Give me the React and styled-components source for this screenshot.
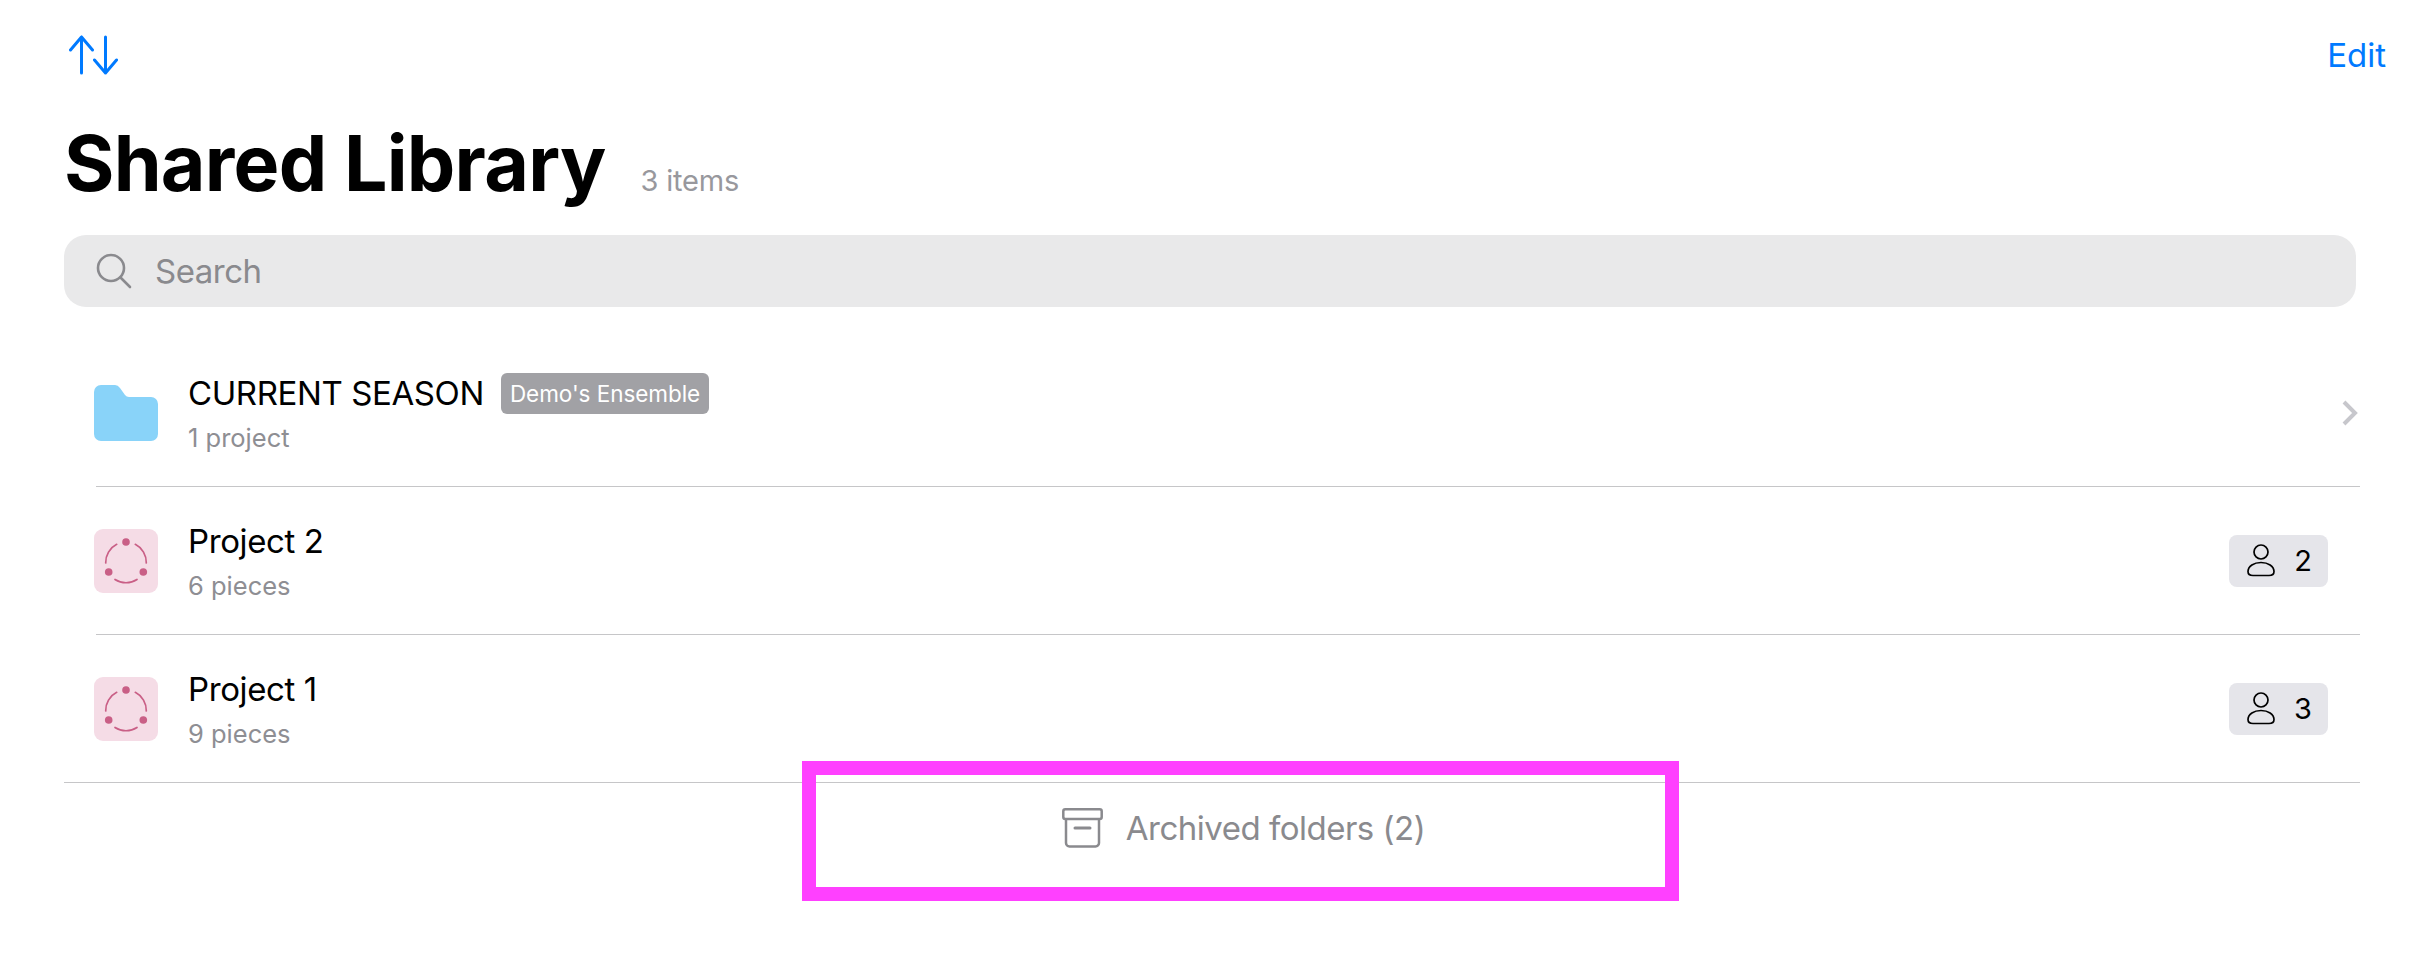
import React from 'react';
import styled, { createGlobalStyle } from 'styled-components';

const GlobalStyle = createGlobalStyle`
    html, body {
        margin: 0;
        padding: 0;
        background: #fff;
        font-family: Inter, "Liberation Sans", sans-serif;
        color: #000;
    }
`;

const Page = styled.div`
    width: 2420px;
    height: 971px;
    overflow: hidden;
    box-sizing: border-box;
`;

const TopBar = styled.div`
    display: flex;
    justify-content: space-between;
    align-items: flex-start;
    height: 123px;
    padding: 35px 34px 0 69px;
    box-sizing: border-box;
`;

const EditButton = styled.span`
    color: #007aff;
    font-size: 33px;
    line-height: 40px;
`;

const TitleRow = styled.div`
    display: flex;
    align-items: baseline;
    gap: 35px;
    height: 112px;
    padding-left: 64px;
`;

const Title = styled.h1`
    margin: 0;
    font-size: 77px;
    line-height: 80px;
    font-weight: 700;
    letter-spacing: -0.75px;
`;

const ItemCount = styled.span`
    color: #98989d;
    font-size: 29px;
    letter-spacing: -0.2px;
`;

const SearchBar = styled.div`
    display: flex;
    align-items: center;
    gap: 23px;
    height: 72px;
    margin: 0 64px;
    padding-left: 32px;
    background: #e9e9ea;
    border-radius: 22px;
    color: #8a8a8e;
    font-size: 33px;
    letter-spacing: -0.5px;
`;

const List = styled.div`
    margin: 32px 60px 0 64px;
`;

const Row = styled.div`
    display: flex;
    align-items: center;
    height: 148px;
    box-sizing: border-box;
    border-bottom: 1px solid #c6c6c8;
    margin-left: ${props => (props.$last ? '0' : '32px')};
    padding-left: ${props => (props.$last ? '30px' : '0')};
    & > svg:first-child {
        margin-left: ${props => (props.$last ? '0' : '-2px')};
    }
`;

const RowText = styled.div`
    flex: 1;
    margin-left: 30px;
`;

const RowTitleLine = styled.div`
    display: flex;
    align-items: center;
    gap: 17px;
    height: 41px;
    font-size: 33px;
    letter-spacing: -0.4px;
`;

const RowSub = styled.div`
    margin-top: 9px;
    color: #8e8e93;
    font-size: 25.5px;
    line-height: 30px;
`;

const Badge = styled.span`
    display: flex;
    align-items: center;
    height: 41px;
    padding: 0 9px;
    background: #a1a1a5;
    border-radius: 6px;
    color: #fff;
    font-size: 22.5px;
    letter-spacing: -0.05px;
`;

const MemberPill = styled.div`
    display: flex;
    align-items: center;
    gap: 19px;
    height: 52px;
    margin-right: 32px;
    padding: 0 16px 0 18px;
    background: #e5e5ea;
    border-radius: 8px;
    font-size: 29px;
`;

const Chevron = styled.svg`
    margin-right: 2px;
`;

const ArchiveBox = styled.div`
    display: flex;
    align-items: center;
    justify-content: center;
    gap: 23px;
    width: 877px;
    height: 140px;
    margin: -22px 0 0 802px;
    padding: 0 0 6px 6px;
    box-sizing: border-box;
    border: 14px solid #ff40ff;
    color: #8a8a8e;
    font-size: 33px;
    letter-spacing: -0.5px;
`;

const SortIcon = () => (
    <svg width="49" height="40" viewBox="0 0 49 40" fill="none" stroke="#007aff" strokeWidth="3" strokeLinecap="round" strokeLinejoin="round">
        <path d="M12.500 2V38M1.500 15L12.500 2L23.500 15" />
        <path d="M36.500 2V38M25.500 25L36.500 38L47.500 25" />
    </svg>
);

const SearchIcon = () => (
    <svg width="36" height="36" viewBox="0 0 36 36" fill="none" stroke="#8a8a8e" strokeWidth="2.600" strokeLinecap="round">
        <circle cx="15" cy="15" r="13" />
        <path d="M24.500 24.500L34 34" />
    </svg>
);

const FolderIcon = () => (
    <svg width="64" height="56" viewBox="0 0 64 56">
        <path
            fill="#89d3f9"
            d="M0 7a7 7 0 0 1 7-7H21q3 0 5 3L31 10q1.500 2 4 2H57a7 7 0 0 1 7 7V49a7 7 0 0 1-7 7H7a7 7 0 0 1-7-7Z"
        />
    </svg>
);

const ProjectIcon = () => (
    <svg width="64" height="64" viewBox="0 0 64 64">
        <rect width="64" height="64" rx="9" fill="#f5dce6" />
        <g fill="#c95f86">
            <circle cx="32" cy="13" r="3.800" />
            <circle cx="14.700" cy="43" r="3.800" />
            <circle cx="49.300" cy="43" r="3.800" />
        </g>
        <g fill="none" stroke="#c95f86" strokeWidth="1.700" strokeLinecap="round">
            <path d="M11.700 34A20.300 20.300 0 0 1 22.700 15.300" />
            <path d="M41.300 15.300A20.300 20.300 0 0 1 52.300 34" />
            <path d="M21 50.500A20.300 20.300 0 0 0 43 50.500" />
        </g>
    </svg>
);

const PersonIcon = () => (
    <svg width="28" height="33" viewBox="0 0 28 33" fill="none" stroke="#000" strokeWidth="1.700">
        <circle cx="14" cy="8" r="7" />
        <path d="M6 31.500H22C25 31.500 27 30 27 27.500C27 22 21 18.500 14 18.500C7 18.500 1 22 1 27.500C1 30 3 31.500 6 31.500Z" />
    </svg>
);

const ArchiveIcon = () => (
    <svg width="41" height="40" viewBox="0 0 41 40" fill="none" stroke="#8a8a8e" strokeWidth="2.500" strokeLinejoin="round">
        <rect x="1.300" y="1.300" width="38.400" height="9.700" rx="2" />
        <path d="M4 11V35a3.500 3.500 0 0 0 3.500 3.500H33.500A3.500 3.500 0 0 0 37 35V11" />
        <path d="M13 20H28" strokeWidth="3" strokeLinecap="round" />
    </svg>
);

const rows = [
    { id: 'p2', name: 'Project 2', sub: '6 pieces', members: 2 },
    { id: 'p1', name: 'Project 1', sub: '9 pieces', members: 3, last: true },
];

const App = () => {
    return (
        <Page>
            <GlobalStyle />
            <TopBar>
                <SortIcon />
                <EditButton>Edit</EditButton>
            </TopBar>
            <TitleRow>
                <Title>Shared Library</Title>
                <ItemCount>3 items</ItemCount>
            </TitleRow>
            <SearchBar>
                <SearchIcon />
                Search
            </SearchBar>
            <List>
                <Row>
                    <FolderIcon />
                    <RowText>
                        <RowTitleLine>
                            CURRENT SEASON
                            <Badge>Demo's Ensemble</Badge>
                        </RowTitleLine>
                        <RowSub>1 project</RowSub>
                    </RowText>
                    <Chevron width="16" height="26" viewBox="0 0 16 26" fill="none" stroke="#c7c7cc" strokeWidth="4">
                        <path d="M2 2L13 13L2 24" />
                    </Chevron>
                </Row>
                {rows.map(row => (
                    <Row key={row.id} $last={row.last}>
                        <ProjectIcon />
                        <RowText>
                            <RowTitleLine>{row.name}</RowTitleLine>
                            <RowSub>{row.sub}</RowSub>
                        </RowText>
                        <MemberPill>
                            <PersonIcon />
                            {row.members}
                        </MemberPill>
                    </Row>
                ))}
            </List>
            <ArchiveBox>
                <ArchiveIcon />
                Archived folders (2)
            </ArchiveBox>
        </Page>
    );
};

export default App;
